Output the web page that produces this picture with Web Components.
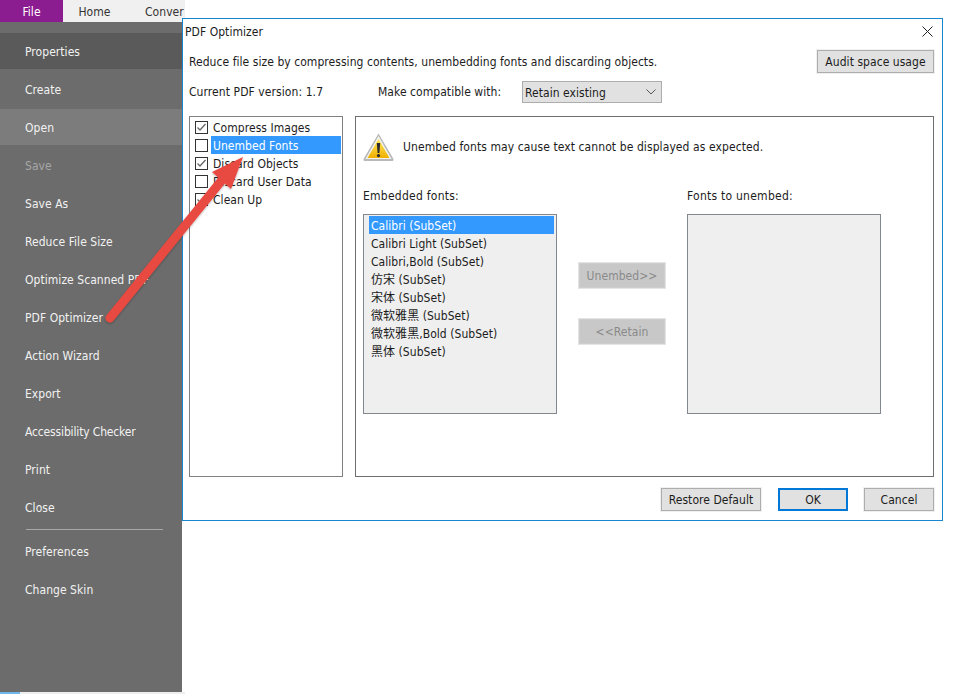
<!DOCTYPE html>
<html>
<head>
<meta charset="utf-8">
<title>PDF Optimizer</title>
<style>
  html, body { margin: 0; height: 100%; background: #fff; overflow: hidden; }
  body {
    font-family: "DejaVu Sans Condensed", "DejaVu Sans", "Noto Sans CJK SC", sans-serif;
    font-size: 12px;
    letter-spacing: .05px;
    color: #1c1c1c;
    position: relative;
  }
</style>
</head>
<body>
<app-shell>
  <menu-item slot="menu" dark>Properties</menu-item>
  <menu-item slot="menu">Create</menu-item>
  <menu-item slot="menu" light>Open</menu-item>
  <menu-item slot="menu" disabled>Save</menu-item>
  <menu-item slot="menu">Save As</menu-item>
  <menu-item slot="menu">Reduce File Size</menu-item>
  <menu-item slot="menu">Optimize Scanned PDF</menu-item>
  <menu-item slot="menu">PDF Optimizer</menu-item>
  <menu-item slot="menu">Action Wizard</menu-item>
  <menu-item slot="menu">Export</menu-item>
  <menu-item slot="menu" style="letter-spacing:-.15px">Accessibility Checker</menu-item>
  <menu-item slot="menu">Print</menu-item>
  <menu-item slot="menu">Close</menu-item>
  <menu-rule slot="menu"></menu-rule>
  <menu-item slot="menu">Preferences</menu-item>
  <menu-item slot="menu">Change Skin</menu-item>
</app-shell>

<pdf-optimizer>
  <check-row slot="options" checked>Compress Images</check-row>
  <check-row slot="options" selected>Unembed Fonts</check-row>
  <check-row slot="options" checked>Discard Objects</check-row>
  <check-row slot="options">Discard User Data</check-row>
  <check-row slot="options" checked>Clean Up</check-row>

  <font-row slot="embedded" selected>Calibri (SubSet)</font-row>
  <font-row slot="embedded">Calibri Light (SubSet)</font-row>
  <font-row slot="embedded">Calibri,Bold (SubSet)</font-row>
  <font-row slot="embedded">仿宋 (SubSet)</font-row>
  <font-row slot="embedded">宋体 (SubSet)</font-row>
  <font-row slot="embedded">微软雅黑 (SubSet)</font-row>
  <font-row slot="embedded">微软雅黑,Bold (SubSet)</font-row>
  <font-row slot="embedded">黑体 (SubSet)</font-row>
</pdf-optimizer>

<red-arrow></red-arrow>

<script>
class AppShell extends HTMLElement {
  constructor() {
    super();
    this.attachShadow({ mode: "open" });
    this.shadowRoot.innerHTML = `
      <style>
        :host { display: flex; flex-direction: column; width: 185px; height: 694px; }
        .tabs { display: flex; height: 22px; background: #f0f0f0; color: #333; flex: none; }
        .tab { text-align: center; line-height: 24px; white-space: nowrap; }
        .tab.file { width: 63px; background: #8c1d90; color: #fff; }
        .tab.home { width: 63px; }
        .tab.conv { padding-left: 19px; }
        .menu { flex: 1; width: 182px; background: #6c6c6c; padding-top: 11px; box-sizing: border-box; }
        .foot { display: flex; height: 2px; background: #eee; flex: none; }
        .foot i { width: 20px; background: #6db8e8; }
      </style>
      <div class="tabs">
        <div class="tab file">File</div>
        <div class="tab home">Home</div>
        <div class="tab conv">Conver</div>
      </div>
      <div class="menu"><slot name="menu"></slot></div>
      <div class="foot"><i></i></div>
    `;
  }
}

class MenuItem extends HTMLElement {
  constructor() {
    super();
    this.attachShadow({ mode: "open" });
    this.shadowRoot.innerHTML = `
      <style>
        :host {
          display: block; height: 36px; line-height: 38px; margin-bottom: 2px;
          padding-left: 25px; color: #f2f2f2; white-space: nowrap; overflow: hidden;
        }
        :host([dark]) { background: #5a5a5a; }
        :host([light]) { background: #7c7c7c; }
        :host([disabled]) { color: #a6a6a6; }
      </style>
      <slot></slot>
    `;
  }
}

class MenuRule extends HTMLElement {
  constructor() {
    super();
    this.attachShadow({ mode: "open" });
    this.shadowRoot.innerHTML = `
      <style>
        :host { display: block; height: 6px; padding: 1px 19px 0 26px; margin-top: -1px; margin-bottom: 1px; box-sizing: border-box; }
        div { height: 1px; margin-top: 2px; background: #a8a8a8; }
      </style>
      <div></div>
    `;
  }
}

class UiButton extends HTMLElement {
  constructor() {
    super();
    this.attachShadow({ mode: "open" });
    this.shadowRoot.innerHTML = `
      <style>
        :host {
          display: flex; align-items: center; justify-content: center; box-sizing: border-box;
          background: #e1e1e1; border: 1px solid #adadad; outline: 1px solid #f0f0f0;
          white-space: nowrap; color: #1c1c1c;
        }
        :host([primary]) { border: 2px solid #0078d7; outline: none; }
        :host([off]) { background: #c8c8c8; border-color: #cdcdcd; outline: none; box-shadow: 0 0 0 1px #e4e4e4; color: #8a8a8a; }
      </style>
      <slot></slot>
    `;
  }
}

class CheckRow extends HTMLElement {
  constructor() {
    super();
    this.attachShadow({ mode: "open" });
    this.shadowRoot.innerHTML = `
      <style>
        :host { display: flex; align-items: center; height: 18px; }
        .box {
          width: 13px; height: 13px; box-sizing: border-box; border: 1px solid #333; background: #fff;
          margin: 0 3px 0 5px; flex: none; display: flex;
        }
        svg { display: none; }
        :host([checked]) svg { display: block; }
        .label { flex: 1; height: 18px; line-height: 20px; padding-left: 2px; margin-right: 1px; }
        :host([selected]) .label { background: #3399ff; color: #fff; }
      </style>
      <div class="box">
        <svg width="11" height="11" viewBox="0 0 11 11"><path d="M1.5 5.5 L4 8 L9.5 2" fill="none" stroke="#666" stroke-width="1.3"/></svg>
      </div>
      <div class="label"><slot></slot></div>
    `;
  }
}

class FontRow extends HTMLElement {
  constructor() {
    super();
    this.attachShadow({ mode: "open" });
    this.shadowRoot.innerHTML = `
      <style>
        :host { display: block; height: 18px; line-height: 20px; padding-left: 2px; white-space: nowrap; }
        :host([selected]) { background: #3399ff; color: #fff; }
      </style>
      <slot></slot>
    `;
  }
}

class WarnIcon extends HTMLElement {
  constructor() {
    super();
    this.attachShadow({ mode: "open" });
    this.shadowRoot.innerHTML = `
      <style>
        :host { display: block; width: 32px; height: 29px; flex: none; margin-top: 2px; }
        svg { display: block; }
      </style>
      <svg width="32" height="29" viewBox="0 0 32 29">
        <defs>
          <linearGradient id="y" x1="0" y1="0" x2="0" y2="1">
            <stop offset="0" stop-color="#ffe860"/>
            <stop offset="1" stop-color="#f0b000"/>
          </linearGradient>
        </defs>
        <path d="M15.5 .5 L30.5 26 Q31 28 29.5 28 L1.5 28 Q0 28 .5 26 Z" fill="#b9b9b9"/>
        <path d="M15.5 3 L28.5 26 L2.5 26 Z" fill="#f4f4ec"/>
        <path d="M15.5 6 L26.5 25 L4.5 25 Z" fill="url(#y)"/>
        <path d="M13.8 10 L17.2 10 L16.4 20 L14.6 20 Z" fill="#2a2a2a"/>
        <circle cx="15.5" cy="22.6" r="1.6" fill="#2a2a2a"/>
      </svg>
    `;
  }
}

class PdfOptimizer extends HTMLElement {
  constructor() {
    super();
    this.attachShadow({ mode: "open" });
    this.shadowRoot.innerHTML = `
      <style>
        :host {
          display: flex; flex-direction: column; position: absolute; left: 182px; top: 18px;
          width: 761px; height: 503px; box-sizing: border-box; border: 1px solid #1a86d0;
          background: #fff; color: #1c1c1c;
        }
        .title { display: flex; justify-content: space-between; align-items: center; height: 24px; padding: 0 9px 0 2px; flex: none; }
        .title span { padding-top: 2px; }
        .top { display: flex; justify-content: space-between; align-items: center; height: 23px; margin-top: 7px; padding: 0 8px 0 6px; flex: none; }
        .top ui-button { width: 117px; height: 23px; }
        .ver { display: flex; align-items: center; height: 22px; margin-top: 8px; padding-left: 6px; flex: none; }
        .ver .cur { width: 189px; letter-spacing: .08px; }
        .ver .lab { width: 144px; }
        .select {
          width: 140px; height: 22px; box-sizing: border-box; background: #e1e1e1; border: 1px solid #adadad;
          display: flex; align-items: center; justify-content: space-between; padding: 0 5px 0 2px;
        }
        .select span { line-height: 22px; padding-top: 2px; }
        .main { display: flex; gap: 12px; height: 361px; margin-top: 13px; padding: 0 8px 0 6px; flex: none; }
        .options { width: 154px; box-sizing: border-box; border: 1px solid #808080; padding-top: 1px; flex: none; }
        .panel { flex: 1; box-sizing: border-box; border: 1px solid #6e6e6e; padding: 15px 7px 0; display: flex; flex-direction: column; }
        .warn { display: flex; align-items: center; gap: 8px; height: 29px; flex: none; letter-spacing: .09px; }
        .lists { display: flex; margin-top: 25px; }
        .col { display: flex; flex-direction: column; width: 194px; flex: none; }
        .col .cap { height: 18px; line-height: 20px; margin-bottom: 10px; letter-spacing: .25px; }
        .box { height: 200px; box-sizing: border-box; background: #efefef; border: 1px solid #828790; }
        .box.fonts { padding: 1px 2px 0 5px; }
        .move { width: 130px; flex: none; padding: 77px 22px 0; box-sizing: border-box; display: flex; flex-direction: column; gap: 31px; }
        .move ui-button { height: 25px; width: 86px; }
        .foot { display: flex; justify-content: flex-end; margin-top: 11px; padding-right: 8px; flex: none; }
        .foot ui-button { height: 23px; width: 70px; margin-left: 16px; }
        .foot ui-button.restore { width: 100px; }
        .foot ui-button.ok { margin-left: 17px; }
      </style>
      <div class="title">
        <span>PDF Optimizer</span>
        <svg width="11" height="11" viewBox="0 0 11 11"><path d="M.5 .5 L10.5 10.5 M10.5 .5 L.5 10.5" stroke="#222" fill="none"/></svg>
      </div>
      <div class="top">
        <span>Reduce file size by compressing contents, unembedding fonts and discarding objects.</span>
        <ui-button>Audit space usage</ui-button>
      </div>
      <div class="ver">
        <span class="cur">Current PDF version: 1.7</span>
        <span class="lab">Make compatible with:</span>
        <div class="select">
          <span>Retain existing</span>
          <svg width="10" height="6" viewBox="0 0 10 6"><path d="M.5 .5 L5 5 L9.5 .5" fill="none" stroke="#555"/></svg>
        </div>
      </div>
      <div class="main">
        <div class="options"><slot name="options"></slot></div>
        <div class="panel">
          <div class="warn">
            <warn-icon></warn-icon>
            <span>Unembed fonts may cause text cannot be displayed as expected.</span>
          </div>
          <div class="lists">
            <div class="col">
              <div class="cap">Embedded fonts:</div>
              <div class="box fonts"><slot name="embedded"></slot></div>
            </div>
            <div class="move">
              <ui-button off>Unembed&gt;&gt;</ui-button>
              <ui-button off>&lt;&lt;Retain</ui-button>
            </div>
            <div class="col">
              <div class="cap">Fonts to unembed:</div>
              <div class="box"></div>
            </div>
          </div>
        </div>
      </div>
      <div class="foot">
        <ui-button class="restore">Restore Default</ui-button>
        <ui-button class="ok" primary>OK</ui-button>
        <ui-button>Cancel</ui-button>
      </div>
    `;
  }
}

// annotation drawn over the screenshot, so it sits on its own layer
class RedArrow extends HTMLElement {
  constructor() {
    super();
    this.attachShadow({ mode: "open" });
    this.shadowRoot.innerHTML = `
      <style>
        :host { display: block; position: absolute; left: 0; top: 0; width: 967px; height: 694px; pointer-events: none; }
      </style>
      <svg width="967" height="694" viewBox="0 0 967 694">
        <defs>
          <filter id="s" x="-20%" y="-20%" width="140%" height="140%">
            <feDropShadow dx="0" dy="1" stdDeviation="1.2" flood-color="#000" flood-opacity=".3"/>
          </filter>
        </defs>
        <g filter="url(#s)">
          <path d="M110 318 L222 180" stroke="#e8483f" stroke-width="9" stroke-linecap="round" fill="none"/>
          <path d="M243 157 L231 189 L212 172 Z" fill="#e8483f"/>
        </g>
      </svg>
    `;
  }
}

customElements.define("app-shell", AppShell);
customElements.define("menu-item", MenuItem);
customElements.define("menu-rule", MenuRule);
customElements.define("ui-button", UiButton);
customElements.define("check-row", CheckRow);
customElements.define("font-row", FontRow);
customElements.define("warn-icon", WarnIcon);
customElements.define("pdf-optimizer", PdfOptimizer);
customElements.define("red-arrow", RedArrow);
</script>
</body>
</html>
